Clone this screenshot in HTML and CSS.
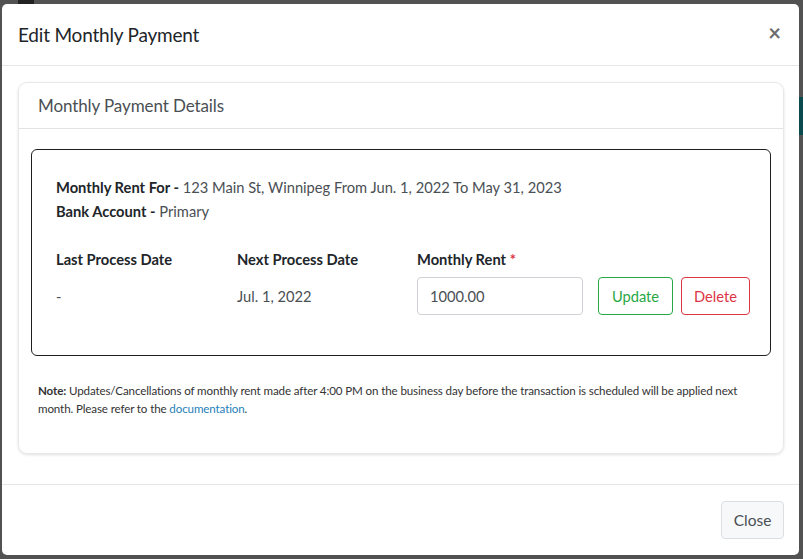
FILE: index.html
```html
<!DOCTYPE html>
<html>
<head>
<meta charset="utf-8">
<link rel="stylesheet" href="styles.css">
</head>
<body>
<div class="backdrop">
  <div class="bg-tab"></div>
  <div class="bg-teal"></div>
  <div class="modal">
    <div class="modal-header">
      <h5 class="modal-title">Edit Monthly Payment</h5>
      <span class="close">&times;</span>
    </div>
    <div class="modal-body">
      <div class="card">
        <div class="card-header">Monthly Payment Details</div>
        <div class="card-body">
          <div class="box">
            <div class="line"><b>Monthly Rent For -</b> 123 Main St, Winnipeg From Jun. 1, 2022 To May 31, 2023</div>
            <div class="line"><b>Bank Account -</b> Primary</div>
            <div class="grid">
              <div class="lbl">Last Process Date</div>
              <div class="lbl">Next Process Date</div>
              <div class="lbl">Monthly Rent <span class="req">*</span></div>
              <div class="val">-</div>
              <div class="val">Jul. 1, 2022</div>
              <div class="controls">
                <input class="input" type="text" value="1000.00">
                <button class="btn btn-green">Update</button>
                <button class="btn btn-red">Delete</button>
              </div>
            </div>
          </div>
          <p class="note"><span class="note-b">Note:</span> Updates/Cancellations of monthly rent made after 4:00 PM on the business day before the transaction is scheduled will be applied next month. Please refer to the <a href="#">documentation</a>.</p>
        </div>
      </div>
    </div>
    <div class="modal-footer">
      <button class="btn btn-close">Close</button>
    </div>
  </div>
</div>
</body>
</html>
```
FILE: styles.css
```css
html, body {
  margin: 0;
  padding: 0;
}
body {
  font-family: Lato, "Noto Sans", sans-serif;
  color: #212529;
  background: #555;
}
.backdrop {
  position: relative;
  width: 803px;
  height: 559px;
  background: #525252;
  padding: 4px 4px 0 2px;
  box-sizing: border-box;
  overflow: hidden;
}
.bg-tab {
  position: absolute;
  left: 18px;
  top: 0;
  width: 16px;
  height: 4px;
  background: #222;
}
.bg-teal {
  position: absolute;
  right: 0;
  top: 97px;
  width: 4px;
  height: 38px;
  background: #0b4a4f;
}
.modal {
  position: relative;
  background: #fff;
  border-radius: 5px;
  height: 551px;
  display: flex;
  flex-direction: column;
  overflow: hidden;
}
.modal-header {
  height: 62px;
  border-bottom: 1px solid #e6e6e6;
  display: flex;
  align-items: center;
  justify-content: space-between;
  padding: 0 16px;
  box-sizing: border-box;
}
.modal-title {
  margin: 0;
  font-size: 19px;
  font-weight: 400;
  letter-spacing: -0.2px;
  color: #212529;
}
.close {
  font-size: 22px;
  font-weight: 700;
  color: #6c6c6c;
  line-height: 1;
  margin-top: -4px;
  margin-right: 2px;
}
.modal-body {
  flex: 1;
  padding: 16px 15px 0 16px;
}
.card {
  border: 1px solid #e8e8e8;
  border-radius: 9px;
  box-shadow: 0 1px 3px rgba(0,0,0,0.12);
  height: 372px;
  box-sizing: border-box;
}
.card-header {
  height: 45px;
  border-bottom: 1px solid #e3e3e3;
  display: flex;
  align-items: center;
  padding: 0 19px;
  font-size: 17px;
  letter-spacing: -0.1px;
  color: #4a4f54;
}
.card-body {
  padding: 20px 12px 0 12px;
}
.box {
  border: 1px solid #1f1f1f;
  border-radius: 6px;
  padding: 25px 24px 25px 24px;
  height: 207px;
  box-sizing: border-box;
}
.line {
  font-size: 14.7px;
  line-height: 24px;
  color: #4a4f54;
}
.line b {
  color: #212529;
}
.grid {
  display: grid;
  grid-template-columns: 181px 180px auto;
  margin-top: 24px;
  row-gap: 6px;
  align-items: center;
}
.lbl {
  font-weight: 700;
  font-size: 14.7px;
  line-height: 24px;
}
.req {
  color: #dc3545;
}
.val {
  font-size: 14.7px;
  color: #4a4f54;
}
.controls {
  display: flex;
  align-items: center;
}
.input {
  width: 166px;
  height: 38px;
  box-sizing: border-box;
  border: 1px solid #cfd3d7;
  border-radius: 4px;
  padding: 0 12px;
  font-family: inherit;
  font-size: 14.7px;
  color: #4a4f54;
  margin-right: 15px;
}
.btn {
  height: 38px;
  box-sizing: border-box;
  border-radius: 4px;
  background: #fff;
  font-family: inherit;
  font-size: 14.7px;
  padding: 0 10px;
  margin-right: 8px;
}
.btn-green {
  border: 1px solid #28a745;
  color: #28a745;
  width: 75px;
}
.btn-red {
  border: 1px solid #dc3545;
  color: #dc3545;
  width: 69px;
}
.note {
  margin: 26px 0 0 7px;
  font-size: 11.6px;
  letter-spacing: -0.13px;
  line-height: 18px;
  color: #333;
}
.note-b {
  font-weight: 700;
}
.note a {
  color: #1f7fb8;
  text-decoration: none;
}
.modal-footer {
  height: 70px;
  border-top: 1px solid #e6e6e6;
  display: flex;
  align-items: center;
  justify-content: flex-end;
  padding: 0 15px;
}
.btn-close {
  background: #f7f8f9;
  border: 1px solid #dcdfe2;
  color: #4a4f54;
  width: 63px;
  margin: 0;
  font-size: 15.5px;
}
```
